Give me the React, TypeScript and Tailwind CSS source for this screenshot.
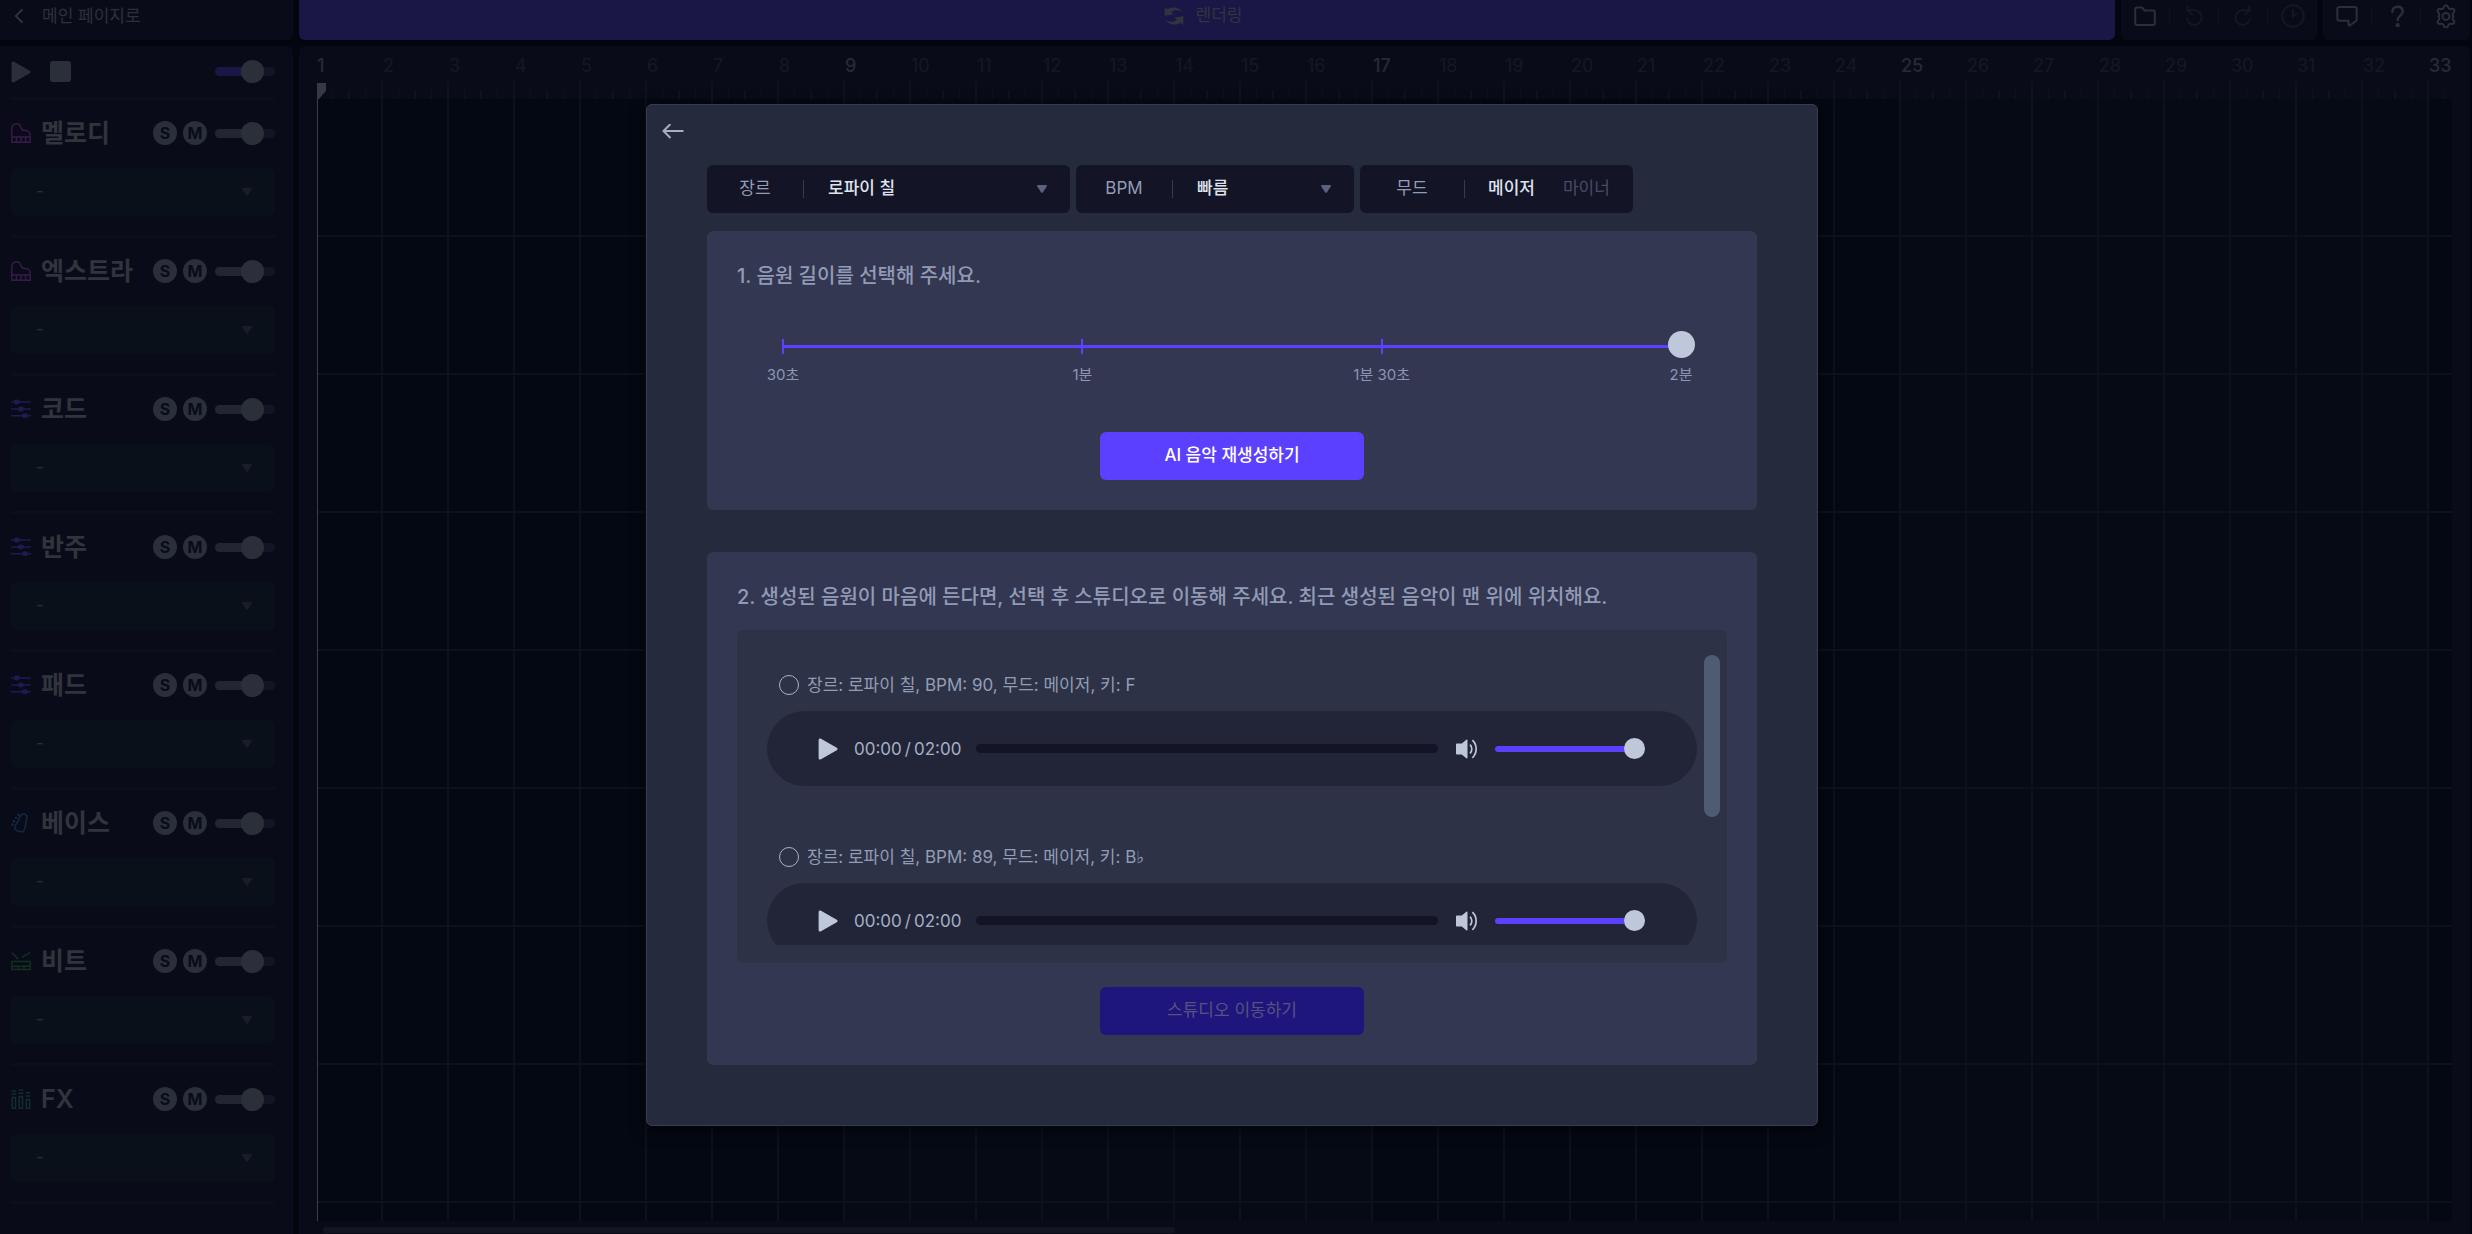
import React, { useState } from "react";

type IconName = "piano" | "faders" | "bass" | "drum" | "fx";

const tracks: { name: string; icon: IconName; color: string }[] = [
  { name: "멜로디", icon: "piano", color: "text-[#371a48]" },
  { name: "엑스트라", icon: "piano", color: "text-[#371a48]" },
  { name: "코드", icon: "faders", color: "text-[#211a50]" },
  { name: "반주", icon: "faders", color: "text-[#211a50]" },
  { name: "패드", icon: "faders", color: "text-[#211a50]" },
  { name: "베이스", icon: "bass", color: "text-[#122a42]" },
  { name: "비트", icon: "drum", color: "text-[#12301f]" },
  { name: "FX", icon: "fx", color: "text-[#112d33]" },
];

const songs = [
  { id: "song-1", label: "장르: 로파이 칠, BPM: 90, 무드: 메이저, 키: F" },
  { id: "song-2", label: "장르: 로파이 칠, BPM: 89, 무드: 메이저, 키: B♭" },
];

const durations = ["30초", "1분", "1분 30초", "2분"];
const bars = Array.from({ length: 33 }, (_, i) => i + 1);
const laneRows = Array.from({ length: 8 }, (_, i) => i);

function TrackIcon({ name }: { name: IconName }) {
  return (
    <svg viewBox="0 0 20 20" className="size-5" fill="none" stroke="currentColor" strokeWidth="1.5" aria-hidden="true">
      {name === "piano" && (
        <path d="M.8 14V5.6C.8 2.8 3 .8 5.4.8s3.9 1.6 4.5 3.7c.6 2.200 2 3.100 4.300 3.100 3.200 0 5 1.900 5 4.900v6.700H.8V14h18.400M5.400 14v5M10 14v5M14.600 14v5" />
      )}
      {name === "faders" && (
        <>
          <path d="M.5 3h19M.5 10h19M.5 16.700h19" strokeLinecap="round" />
          <g fill="currentColor" stroke="none">
            <ellipse cx="5.800" cy="3" rx="3" ry="2.400" />
            <ellipse cx="9.800" cy="10" rx="3" ry="2.400" />
            <ellipse cx="14" cy="16.700" rx="3" ry="2.400" />
          </g>
        </>
      )}
      {name === "bass" && (
        <>
          <path d="M8.600 4.200C9.400 1.800 11 .8 12.800.9c2.300.2 3.500 1.900 3 4.300-.3 1.600-.8 2.300-.9 4-.1 2.200-.2 4.300-1.200 6.600-.8 1.900-1.600 2.700-2.400 3.400-.8-.6-1.800-.9-3.300-1-2.400-.2-4.300-1.400-4.200-3.900.2-2.600 2-4 3.100-6 .8-1.500 1.100-2.200 1.700-4.100Z" />
          <g fill="currentColor" stroke="none">
            <circle cx="7.500" cy="2" r="1.200" />
            <circle cx="5" cy="5" r="1.200" />
            <circle cx="3" cy="8.200" r="1.200" />
            <circle cx="1.500" cy="11.500" r="1.200" />
          </g>
        </>
      )}
      {name === "drum" && (
        <path d="M.8 1.400 7 8M19.200 1.400 11 6.400M.8 10.400h18.400v8.200H.8zM.8 15.200h18.400M6.900 15.200v3.400M13.100 15.200v3.400" />
      )}
      {name === "fx" && (
        <path d="M1.200 8.500h3.300v10.700H1.200zM8.200 7.500h3.300v11.700H8.200zM15.300 10.500h3.300v8.700h-3.300zM.5 2h4.800M.5 5h4.800M7.500 1h4.800M7.500 4.200h4.800M14.600 3.800h4.800M14.600 7h4.800" />
      )}
    </svg>
  );
}

function Caret({ className }: { className: string }) {
  return (
    <svg viewBox="0 0 10 8" className={"h-2 w-2.5 " + className} fill="currentColor" aria-hidden="true">
      <path d="M1 0h8c.9 0 1.300.8.8 1.500L5.800 7.400c-.4.6-1.200.6-1.600 0L.2 1.500C-.3.800.1 0 1 0Z" />
    </svg>
  );
}

function PlayIcon() {
  return (
    <svg viewBox="0 0 20 22" className="h-[22px] w-5" fill="currentColor" aria-hidden="true">
      <path d="M.6 2C.6.700 1.900 0 3 .7l15.800 9.100c1 .6 1 1.800 0 2.400L3 21.300c-1.100.7-2.400 0-2.400-1.300Z" />
    </svg>
  );
}

function MiniSlider({ label, fill }: { label: string; fill: string }) {
  return (
    <input
      type="range"
      aria-label={label}
      defaultValue={70}
      className={
        "h-6 w-[60px] appearance-none bg-transparent [&::-webkit-slider-runnable-track]:h-[9px] [&::-webkit-slider-runnable-track]:rounded-full [&::-webkit-slider-thumb]:-mt-[7px] [&::-webkit-slider-thumb]:size-[23px] [&::-webkit-slider-thumb]:appearance-none [&::-webkit-slider-thumb]:rounded-full [&::-webkit-slider-thumb]:bg-[#2b2f3a] " +
        fill
      }
    />
  );
}

function TrackRow({ name, icon, color }: { name: string; icon: IconName; color: string }) {
  return (
    <section className="border-b-[3px] border-[#0b0f1a] pt-[15px] pb-[19px]">
      <div className="flex h-9 items-center">
        <span className={color}>
          <TrackIcon name={icon} />
        </span>
        <h2 className="ml-2.5 flex-1 text-[25px] leading-9 font-semibold text-[#31343c]">{name}</h2>
        <div className="flex items-center gap-1.5">
          <button aria-label={name + " 솔로"} className="grid size-6 place-items-center rounded-full bg-[#2b2f3a] text-base leading-6 font-bold text-[#090c18]">
            S
          </button>
          <button aria-label={name + " 음소거"} className="grid size-6 place-items-center rounded-full bg-[#2b2f3a] text-base leading-6 font-bold text-[#090c18]">
            M
          </button>
        </div>
        <div className="ml-2 flex">
          <MiniSlider
            label={name + " 볼륨"}
            fill="[&::-webkit-slider-runnable-track]:bg-[linear-gradient(90deg,#222633_60%,#121624_60%)]"
          />
        </div>
      </div>
      <div className="relative mt-[17px] flex items-center">
        <select aria-label={name + " 소스"} className="h-12 w-full appearance-none rounded-md bg-[#0a1019] px-[25px] text-[17px] text-[#262c39]">
          <option>-</option>
        </select>
        <Caret className="pointer-events-none absolute right-[23px] text-[#191c29]" />
      </div>
    </section>
  );
}

function ToolGroup({ children }: { children: React.ReactNode }) {
  return <div className="flex h-10 rounded-b-md bg-[#090c18] pb-2">{children}</div>;
}

function Tool({ label, dim, last, children }: { label: string; dim?: boolean; last?: boolean; children: React.ReactNode }) {
  return (
    <div className="flex items-center">
      <button
        aria-label={label}
        className={"grid h-8 place-items-center " + (last ? "w-[49px] " : "w-12 ") + (dim ? "text-[#131723]" : "text-[#2c2f3b]")}
      >
        <svg viewBox="0 0 24 24" className="size-6" fill="none" stroke="currentColor" strokeWidth="2" strokeLinejoin="round" aria-hidden="true">
          {children}
        </svg>
      </button>
      {!last && <span className="h-[18px] w-px bg-[#0f131f]" />}
    </div>
  );
}

function TopBar() {
  return (
    <header className="flex h-10 gap-1.5">
      <nav className="w-[293px] rounded-br-md bg-[#090c18] pb-2">
        <a href="#main" className="flex h-8 items-center pl-3.5 text-[17px] leading-8 text-[#2c313c]">
          <svg viewBox="0 0 10 16" className="h-4 w-2.5" fill="none" stroke="currentColor" strokeWidth="2" aria-hidden="true">
            <path d="M8.500 1.200 1.800 8l6.700 6.800" />
          </svg>
          <span className="ml-[18px]">메인 페이지로</span>
        </a>
      </nav>
      <button className="flex h-10 flex-1 items-center justify-center gap-3 rounded-b-md bg-[#1a1747] pr-2 pb-2 text-[17px] text-[#31343f]">
        <svg viewBox="0 0 20 18" className="h-[18px] w-5" fill="currentColor" aria-hidden="true">
          <path d="M.8.300 3.400 2.300C8-.8 14.500-.2 18.500 5 14 2.600 9.800 2.900 7.200 5.200L9.400 7.400.6 8.800Z" />
          <path d="M19.200 17.700 16.600 15.700C12 18.800 5.500 18.200 1.500 13c4.500 2.400 8.700 2.100 11.300-.2L10.600 10.600l8.800-1.400Z" />
        </svg>
        렌더링
      </button>
      <ToolGroup>
        <Tool label="프로젝트">
          <path d="M2.200 5.200c0-1 .7-1.700 1.700-1.700h5l2.600 3h8.600c1 0 1.700.7 1.700 1.700v11.100c0 1-.7 1.700-1.700 1.700H3.900c-1 0-1.700-.7-1.700-1.700Z" />
        </Tool>
        <Tool label="실행 취소" dim>
          <path d="M5 14.500a7.300 7.300 0 1 0 7.500-8.200H5M5.500 2v4.500l4.500 4" strokeLinecap="round" />
        </Tool>
        <Tool label="다시 실행" dim>
          <path d="M19 14.500a7.300 7.300 0 1 1-7.500-8.200H19M18.500 2v4.500l-4.500 4" strokeLinecap="round" />
        </Tool>
        <Tool label="기록" dim last>
          <circle cx="12" cy="12" r="10.800" />
          <path d="M12 5v7.500l4.500-3.500" />
        </Tool>
      </ToolGroup>
      <ToolGroup>
        <Tool label="의견">
          <path d="M4.500 3h15c1.300 0 2.200.9 2.200 2.200v10c0 .8-.4 1.500-1 2l-5.600 4c-.8.5-1.600.1-1.600-.8v-3.700h-9c-1.300 0-2.200-.9-2.200-2.200V5.200C2.300 3.900 3.200 3 4.500 3Z" />
        </Tool>
        <Tool label="도움말">
          <path d="M8.300 8c0-3.200 2.200-5.300 5.300-5.300S18.700 4.600 18.700 7.400c0 4.200-4.800 3.800-5 8.600" strokeLinecap="round" strokeWidth="2.400" />
          <circle cx="13.700" cy="21.200" r="1.100" fill="currentColor" />
        </Tool>
        <Tool label="설정" last>
          <path d="M9.800 3.200c.8-2.600 3.600-2.600 4.400 0 .4 1.400 1.700 2.100 3.100 1.800 2.700-.7 4.100 1.700 2.200 3.700-1 1.100-1 2.500 0 3.600v.2c-1 1.100-1 2.500 0 3.600 1.900 2 .5 4.400-2.200 3.700-1.400-.3-2.700.4-3.100 1.800-.8 2.600-3.600 2.600-4.400 0-.4-1.400-1.700-2.100-3.100-1.800-2.700.7-4.100-1.700-2.200-3.700 1-1.100 1-2.500 0-3.600v-.2c1-1.100 1-2.500 0-3.600-1.900-2-.5-4.400 2.200-3.700 1.400.3 2.700-.4 3.100-1.800Z" />
          <circle cx="12" cy="12.400" r="3.500" />
        </Tool>
      </ToolGroup>
    </header>
  );
}

function Sidebar() {
  return (
    <aside className="w-[293px] rounded-tr-md bg-[#090c18] pr-[18px] pl-[11px]">
      <div className="flex h-[54px] items-center border-b-[3px] border-[#0b0f1a] text-[#2b2f3a]">
        <button aria-label="재생">
          <PlayIcon />
        </button>
        <button aria-label="정지" className="ml-[19px] size-[21px] rounded-[3px] bg-[#2b2f3a]" />
        <div className="ml-auto flex">
          <MiniSlider
            label="전체 볼륨"
            fill="[&::-webkit-slider-runnable-track]:bg-[linear-gradient(90deg,#1a1747_60%,#121624_60%)]"
          />
        </div>
      </div>
      {tracks.map((t) => (
        <TrackRow key={t.name} {...t} />
      ))}
    </aside>
  );
}

function Timeline() {
  return (
    <main className="relative flex min-w-0 flex-1 flex-col rounded-t-md bg-[#090c18] pr-[18px] pl-[18px]">
      <div className="relative flex min-h-0 flex-1 overflow-hidden">
        {bars.map((n) => {
          const strong = n % 8 === 1;
          const lit = Math.floor((n - 1) / 8) % 2 === 1;
          return (
            <div key={n} className="flex w-[66px] shrink-0 flex-col">
              <div className="flex h-[53px] flex-col">
                <div className={"h-[35px] pt-1.5 text-[18px] leading-7 " + (strong ? "font-medium text-[#272a36]" : "text-[#151824]")}>
                  {n}
                </div>
                <div className="flex h-[18px] items-end border-r-2 border-[#0e121d]">
                  <span className="h-[9px] flex-1 border-r border-[#0e121d]" />
                  <span className="h-[9px] flex-1 border-r-2 border-[#0e121d]" />
                  <span className="h-[9px] flex-1 border-r border-[#0e121d]" />
                  <span className="flex-1" />
                </div>
              </div>
              <div className={"flex-1 border-r-2 border-[#0d111b] " + (lit ? "bg-[#060a14]" : "bg-[#040812]")}>
                {laneRows.map((r) => (
                  <div key={r} className="h-[138px] border-b-2 border-[#0d111b]" />
                ))}
              </div>
            </div>
          );
        })}
        <div className="absolute top-[37px] bottom-0 left-0 w-px bg-[#3a3d48]">
          <svg viewBox="0 0 9 17" className="h-[17px] w-[9px] max-w-none text-[#363944]" fill="currentColor" aria-hidden="true">
            <path d="M0 0h9v8L1 17H0Z" />
          </svg>
        </div>
      </div>
      <div className="flex h-[13px] items-end pb-px pl-1.5">
        <div className="h-1.5 w-2/5 rounded-full bg-[#121622]" />
      </div>
    </main>
  );
}

function Filter({ id, label, value, className }: { id: string; label: string; value: string; className: string }) {
  return (
    <div className={"relative flex h-12 items-center rounded-md bg-[#131425] " + className}>
      <label htmlFor={id} className="w-24 text-center text-[#929db5]">
        {label}
      </label>
      <span className="h-[18px] w-px bg-[#363b52]" />
      <select id={id} className="h-full flex-1 appearance-none bg-transparent pl-6 font-medium text-[#dfe3ee]">
        <option>{value}</option>
      </select>
      <Caret className="pointer-events-none absolute right-[23px] text-[#5b6280]" />
    </div>
  );
}

function LengthSlider() {
  const [step, setStep] = useState(3);
  return (
    <div className="relative mx-[46px] mt-12">
      <div className="absolute inset-x-0 top-1.5 h-[3px] bg-[#5b40ff]" />
      <div className="flex justify-between">
        {durations.map((d) => (
          <div key={d} className="flex w-0 flex-col items-center">
            <span className="h-[15px] w-0.5 bg-[#5b40ff]" />
            <span className="mt-2.5 text-[15px] leading-[22px] whitespace-nowrap text-[#8c96b0]">{d}</span>
          </div>
        ))}
      </div>
      <input
        type="range"
        aria-label="음원 길이"
        min={0}
        max={3}
        value={step}
        onChange={(e) => setStep(Number(e.target.value))}
        className="absolute -inset-x-3.5 -top-2 h-[27px] appearance-none bg-transparent [&::-webkit-slider-runnable-track]:h-[27px] [&::-webkit-slider-thumb]:size-[27px] [&::-webkit-slider-thumb]:appearance-none [&::-webkit-slider-thumb]:rounded-full [&::-webkit-slider-thumb]:bg-[#bfc7da]"
      />
    </div>
  );
}

function Song({ id, label }: { id: string; label: string }) {
  return (
    <li>
      <div className="flex h-6 items-center gap-2 pl-3">
        <input id={id} type="radio" name="song" className="size-5 appearance-none rounded-full border border-[#a9b3c9] checked:bg-[#5b40ff]" />
        <label htmlFor={id} className="text-[17px] leading-6 text-[#929db5]">
          {label}
        </label>
      </div>
      <div className="mt-3.5 flex h-[75px] items-center rounded-full bg-[#212537] pr-[52px] pl-[51px] text-[#bfc7da]">
        <button aria-label="재생">
          <PlayIcon />
        </button>
        <span className="ml-4 flex w-[106px] gap-[3px] text-[17px] leading-6 text-[#a5afc6]">
          <time>00:00</time>
          <span>/</span>
          <time>02:00</time>
        </span>
        <input
          type="range"
          aria-label="재생 위치"
          defaultValue={0}
          className="ml-4 h-[9px] min-w-0 flex-1 appearance-none rounded-full bg-[#131425] [&::-webkit-slider-thumb]:size-0 [&::-webkit-slider-thumb]:appearance-none"
        />
        <button aria-label="음소거" className="ml-[18px]">
          <svg viewBox="0 0 22 20" className="h-5 w-[22px]" fill="currentColor" aria-hidden="true">
            <path d="M1 4.600h4.800L10.300.800c.6-.5 1.200-.2 1.200.5v17.400c0 .7-.6 1-1.200.5L5.800 15.400H1c-.6 0-1-.4-1-1V5.600c0-.6.4-1 1-1Z" />
            <path d="M14 5.600c2.400 2.400 2.400 6.400 0 8.800M16.400 1.200c5 4.800 5 12.800 0 17.600" fill="none" stroke="currentColor" strokeWidth="1.700" />
          </svg>
        </button>
        <input
          type="range"
          aria-label="볼륨"
          defaultValue={100}
          className="ml-[17px] h-[21px] w-[150px] appearance-none bg-transparent [&::-webkit-slider-runnable-track]:h-1.5 [&::-webkit-slider-runnable-track]:rounded-full [&::-webkit-slider-runnable-track]:bg-[#5b40ff] [&::-webkit-slider-thumb]:-mt-2 [&::-webkit-slider-thumb]:size-[21px] [&::-webkit-slider-thumb]:appearance-none [&::-webkit-slider-thumb]:rounded-full [&::-webkit-slider-thumb]:bg-[#bfc7da]"
        />
      </div>
    </li>
  );
}

function GenerateDialog() {
  const [mood, setMood] = useState("메이저");
  return (
    <div
      role="dialog"
      aria-label="AI 음악 생성"
      className="flex w-[1172px] flex-col rounded-md border border-[#343d55] bg-[#252a3d] px-[60px] pb-[60px] text-[17px] shadow-[0_4px_16px_#000a]"
    >
      <button aria-label="뒤로" className="mb-1 -ml-[45px] flex h-14 w-6 items-center text-[#a5afc6]">
        <svg viewBox="0 0 22 18" className="h-[18px] w-[22px] shrink-0" fill="none" stroke="currentColor" strokeWidth="2" aria-hidden="true">
          <path d="M21.500 7H1.500M8.500 0 1.500 7l7 7" strokeLinejoin="round" />
        </svg>
      </button>
      <div className="flex gap-1.5">
        <Filter id="genre" label="장르" value="로파이 칠" className="w-[363px]" />
        <Filter id="bpm" label="BPM" value="빠름" className="w-[278px]" />
        <div role="group" aria-label="무드" className="flex h-12 items-center rounded-md bg-[#131425] pr-[23px]">
          <span className="w-[104px] text-center text-[#929db5]">무드</span>
          <span className="h-[18px] w-px bg-[#363b52]" />
          <div className="ml-[23px] flex gap-7">
            {["메이저", "마이너"].map((m) => (
              <button
                key={m}
                aria-pressed={mood === m}
                onClick={() => setMood(m)}
                className={mood === m ? "font-medium text-[#dfe3ee]" : "text-[#464c66]"}
              >
                {m}
              </button>
            ))}
          </div>
        </div>
      </div>

      <section className="mt-[18px] flex flex-col rounded-md bg-[#333751] p-[30px]">
        <h3 className="text-xl leading-[30px] font-medium text-[#919bb5]">1. 음원 길이를 선택해 주세요.</h3>
        <LengthSlider />
        <button className="mt-[46px] h-12 w-[264px] self-center rounded-md bg-[#5b40ff] font-medium text-white">AI 음악 재생성하기</button>
      </section>

      <section className="mt-[42px] flex flex-col rounded-md bg-[#333751] p-[30px]">
        <h3 className="text-xl leading-[30px] font-medium text-[#919bb5]">
          2. 생성된 음원이 마음에 든다면, 선택 후 스튜디오로 이동해 주세요. 최근 생성된 음악이 맨 위에 위치해요.
        </h3>
        <div className="mt-[18px] flex rounded-md bg-[#2d3247] py-[18px] pr-[7px] pl-[30px]">
          <ul className="flex h-[297px] flex-1 flex-col gap-[59px] overflow-y-auto pt-[25px] [scrollbar-width:none]">
            {songs.map((s) => (
              <Song key={s.id} {...s} />
            ))}
          </ul>
          <div className="mt-[7px] ml-[7px] h-[162px] w-4 rounded-full bg-[#4f5a73]" />
        </div>
        <button disabled className="mt-6 h-12 w-[264px] self-center rounded-md bg-[#1f167d] text-[#56547f]">
          스튜디오 이동하기
        </button>
      </section>
    </div>
  );
}

export default function App() {
  return (
    <div className="relative flex h-screen flex-col gap-1.5 overflow-hidden bg-[#03060f] pr-0.5 font-['Inter','DejaVu_Sans','Noto_Sans_CJK_KR',sans-serif]">
      <TopBar />
      <div className="flex min-h-0 flex-1 gap-1.5">
        <Sidebar />
        <Timeline />
      </div>
      <div className="absolute inset-0 flex items-center justify-center pr-2 pb-1">
        <GenerateDialog />
      </div>
    </div>
  );
}
